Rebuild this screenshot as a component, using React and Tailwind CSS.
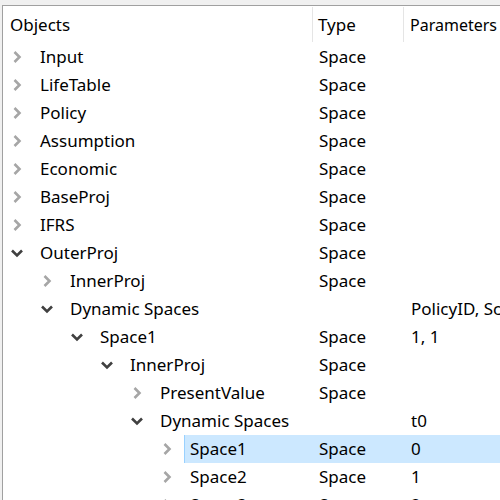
import React from 'react';

const rows = [
  { name: 'Input', level: 0, state: 'closed', type: 'Space', params: '' },
  { name: 'LifeTable', level: 0, state: 'closed', type: 'Space', params: '' },
  { name: 'Policy', level: 0, state: 'closed', type: 'Space', params: '' },
  { name: 'Assumption', level: 0, state: 'closed', type: 'Space', params: '' },
  { name: 'Economic', level: 0, state: 'closed', type: 'Space', params: '' },
  { name: 'BaseProj', level: 0, state: 'closed', type: 'Space', params: '' },
  { name: 'IFRS', level: 0, state: 'closed', type: 'Space', params: '' },
  { name: 'OuterProj', level: 0, state: 'open', type: 'Space', params: '' },
  { name: 'InnerProj', level: 1, state: 'closed', type: 'Space', params: '' },
  { name: 'Dynamic Spaces', level: 1, state: 'open', type: '', params: 'PolicyID, Scen' },
  { name: 'Space1', level: 2, state: 'open', type: 'Space', params: '1, 1' },
  { name: 'InnerProj', level: 3, state: 'open', type: 'Space', params: '' },
  { name: 'PresentValue', level: 4, state: 'closed', type: 'Space', params: '' },
  { name: 'Dynamic Spaces', level: 4, state: 'open', type: '', params: 't0' },
  { name: 'Space1', level: 5, state: 'closed', type: 'Space', params: '0', selected: true },
  { name: 'Space2', level: 5, state: 'closed', type: 'Space', params: '1' },
  { name: 'Space3', level: 5, state: 'closed', type: 'Space', params: '2' },
];

// left offset of the chevron per level (30px indent)
const indents = ['w-[7px]', 'w-[37px]', 'w-[67px]', 'w-[97px]', 'w-[127px]', 'w-[157px]'];
// width left for the name text in the Objects column
const nameWidths = ['w-[278px]', 'w-[248px]', 'w-[218px]', 'w-[188px]', 'w-[158px]', 'w-[128px]'];

const Chevron = ({ open }) =>
  open ? (
    <svg width="14" height="10" viewBox="0 0 14 10" className="shrink-0">
      <path d="M2 2.5 L7 7.5 L12 2.5" fill="none" stroke="#404040" strokeWidth="2.6" />
    </svg>
  ) : (
    <svg width="14" height="14" viewBox="0 0 14 14" className="shrink-0">
      <path d="M4.5 2 L9.5 7 L4.5 12" fill="none" stroke="#a6a6a6" strokeWidth="2.6" />
    </svg>
  );

export default function App() {
  return (
    <div
      className="w-[500px] h-[500px] overflow-hidden bg-[#f0f0f0] pt-[5px] pl-[2px] text-[17px] text-black"
      style={{ fontFamily: '"Noto Sans", "Open Sans", sans-serif' }}
    >
      <div className="h-full bg-white border-t border-l border-[#a0a0a0] overflow-hidden">
        {/* Header */}
        <div className="flex h-[37px] items-center">
          <div className="w-[309px] shrink-0 pl-[7px]">Objects</div>
          <div className="w-[91px] shrink-0 self-stretch flex items-center border-l border-[#e5e5e5] my-[1px] pl-[5px]">Type</div>
          <div className="flex-1 self-stretch flex items-center border-l border-[#e5e5e5] my-[1px] pl-[6px] whitespace-nowrap text-[16px]">Parameters</div>
        </div>

        {/* Tree rows */}
        {rows.map((r, i) => (
          <div key={i} className="flex h-[28px] items-stretch whitespace-nowrap">
            <div className={`${indents[r.level]} shrink-0`} />
            <div className="w-[24px] shrink-0 flex items-center">
              <Chevron open={r.state === 'open'} />
            </div>
            <div
              className={`flex flex-1 items-center min-w-0 ${
                r.selected ? 'bg-[#cce8ff] border-l border-[#99d1ff]' : 'border-l border-transparent'
              }`}
            >
              <div className={`${nameWidths[r.level]} shrink-0 pl-[5px]`}>{r.name}</div>
              <div className="w-[91px] shrink-0 pl-[6px]">{r.type}</div>
              <div className="flex-1 pl-[7px] overflow-hidden">{r.params}</div>
            </div>
          </div>
        ))}
      </div>
    </div>
  );
}
